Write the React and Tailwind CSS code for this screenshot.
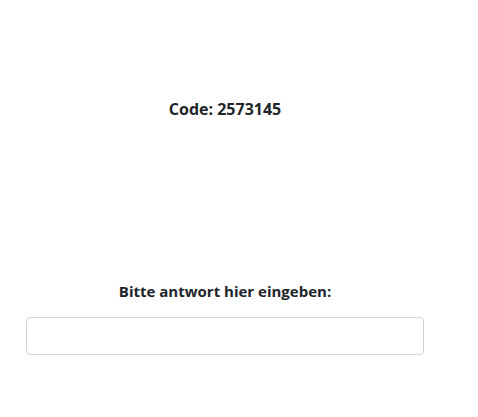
export default function App() {
  return (
    <div
      className="min-h-[417px] bg-white text-[#212529]"
      style={{ fontFamily: '"Open Sans", "Noto Sans", sans-serif' }}
    >
      <div className="ml-[26px] w-[398px] pt-[98px]">
        {/* Code */}
        <p className="text-center text-[16px] font-bold leading-[22px]">Code: 2573145</p>

        {/* Answer */}
        <div className="mt-[161px]">
          <label className="block text-center text-[15px] font-bold leading-[21px]">
            Bitte antwort hier eingeben:
          </label>
          <input
            type="text"
            className="mt-[15px] block h-[38px] w-full rounded-[4px] border border-[#ced4da] bg-white px-3 outline-none"
          />
        </div>
      </div>
    </div>
  );
}
